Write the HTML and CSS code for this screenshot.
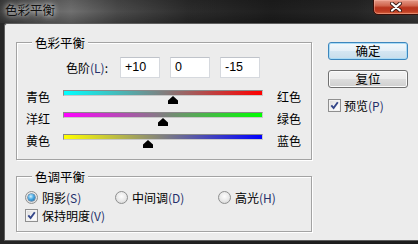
FILE: index.html
```html
<!DOCTYPE html>
<html lang="zh">
<head>
<meta charset="utf-8">
<title>色彩平衡</title>
<link rel="stylesheet" href="styles.css">
</head>
<body>
<div class="window">
  <div class="titlebar">
    <span class="title">色彩平衡</span>
    <span class="close">
      <svg width="12" height="10" viewBox="0 0 12 10">
        <path d="M2 1.5 L10 8.5 M10 1.5 L2 8.5" stroke="#3a1a14" stroke-width="4" stroke-linecap="round"/>
        <path d="M2 1.5 L10 8.5 M10 1.5 L2 8.5" stroke="#ffffff" stroke-width="2.2" stroke-linecap="round"/>
      </svg>
    </span>
  </div>
  <div class="panel">
    <div class="main">
      <fieldset class="group group-color">
        <legend>色彩平衡</legend>
        <div class="levels">
          <span class="levels-label">色阶<span class="key">(L)</span>:</span>
          <span class="field">+10</span>
          <span class="field">0</span>
          <span class="field">-15</span>
        </div>
        <div class="sliders">
          <div class="slider-row">
            <span class="lbl">青色</span>
            <div class="track-wrap">
              <div class="track cyan-red"></div>
              <svg class="thumb" style="left:110px" width="10" height="8" viewBox="0 0 10 8"><path d="M5 0 L10 4.5 V8 H0 V4.5 Z" fill="#000"/></svg>
            </div>
            <span class="lbl lbl-right">红色</span>
          </div>
          <div class="slider-row">
            <span class="lbl">洋红</span>
            <div class="track-wrap">
              <div class="track magenta-green"></div>
              <svg class="thumb" style="left:100px" width="10" height="8" viewBox="0 0 10 8"><path d="M5 0 L10 4.5 V8 H0 V4.5 Z" fill="#000"/></svg>
            </div>
            <span class="lbl lbl-right">绿色</span>
          </div>
          <div class="slider-row">
            <span class="lbl">黄色</span>
            <div class="track-wrap">
              <div class="track yellow-blue"></div>
              <svg class="thumb" style="left:85px" width="10" height="8" viewBox="0 0 10 8"><path d="M5 0 L10 4.5 V8 H0 V4.5 Z" fill="#000"/></svg>
            </div>
            <span class="lbl lbl-right">蓝色</span>
          </div>
        </div>
      </fieldset>
      <fieldset class="group group-tone">
        <legend>色调平衡</legend>
        <div class="radios">
          <span class="opt opt-1"><span class="radio on"></span><span>阴影<span class="key">(S)</span></span></span>
          <span class="opt opt-2"><span class="radio"></span><span>中间调<span class="key">(D)</span></span></span>
          <span class="opt"><span class="radio"></span><span>高光<span class="key">(H)</span></span></span>
        </div>
        <span class="opt check-row"><span class="checkbox"><svg width="9" height="9" viewBox="0 0 9 9"><path d="M1.3 4.3 L3.6 7 L7.8 1.2" fill="none" stroke="#34478a" stroke-width="1.9"/></svg></span><span>保持明度<span class="key">(V)</span></span></span>
      </fieldset>
    </div>
    <div class="side">
      <button class="btn btn-default">确定</button>
      <button class="btn">复位</button>
      <span class="opt side-check"><span class="checkbox"><svg width="9" height="9" viewBox="0 0 9 9"><path d="M1.3 4.3 L3.6 7 L7.8 1.2" fill="none" stroke="#34478a" stroke-width="1.9"/></svg></span><span>预览<span class="key">(P)</span></span></span>
    </div>
  </div>
</div>
</body>
</html>
```
FILE: styles.css
```css
* { box-sizing: border-box; }
html, body { margin: 0; padding: 0; }
body {
  background: #111;
  font-family: "Noto Sans CJK SC", "Noto Sans", sans-serif;
  font-size: 12px;
  color: #000;
}
.window {
  width: 418px;
  height: 244px;
  overflow: hidden;
  display: flex;
  flex-direction: column;
  background: linear-gradient(to right, #262626 0%, #1c1c1c 100%);
}
.titlebar {
  height: 23px;
  flex: none;
  display: flex;
  align-items: flex-start;
  background:
    linear-gradient(to bottom, rgba(0,0,0,0.15) 0%, rgba(0,0,0,0) 50%, rgba(0,0,0,0.25) 100%),
    linear-gradient(to right, #3e3e3e 0%, #5c5c5c 8%, #707070 17%, #4c4c4c 28%, #2c2c2c 45%, #1e1e1e 65%, #262626 85%, #3a3a3a 100%);
}
.title {
  margin: 2px 0 0 5px;
  font-size: 12.5px;
  line-height: 16px;
  color: #111;
  text-shadow: 0 0 5px rgba(255,255,255,0.85), 0 0 9px rgba(255,255,255,0.5);
}
.close {
  margin-left: auto;
  margin-right: -4px;
  margin-top: -1px;
  width: 49px;
  height: 16px;
  border: 1px solid #3b0d06;
  border-radius: 0 0 5px 5px;
  background: linear-gradient(#e59a88 0%, #d0664e 40%, #b8341c 55%, #bd3b22 80%, #d8663e 100%);
  box-shadow: inset 0 0 0 1px rgba(255,190,175,0.45);
  display: flex;
  align-items: center;
  justify-content: center;
}
.close svg { display: block; margin-left: -3px; }
.panel {
  flex: 1;
  margin: 0 0 3px 4px;
  background: #ececec;
  border: 1px solid #5e5e5e;
  border-right: none;
  border-top-left-radius: 3px;
  display: flex;
  gap: 16px;
  padding: 10px 0 0 11px;
}
.main { width: 296px; display: flex; flex-direction: column; gap: 8px; }
.group {
  margin: 0;
  min-width: 0;
  width: 296px;
  border: 1px solid #a3a3a3;
  box-shadow: 1px 1px 0 #fff, inset 1px 1px 0 #fff;
}
.group-color { padding: 6px 8px 12px 8px; }
.group-tone { padding: 6px 8px 9px 8px; }
legend {
  padding: 0 3px;
  margin-left: 7px;
  line-height: 17px;
  font-size: 12.5px;
  background: #ececec;
}
.key { color: #25306a; }
.levels {
  display: flex;
  align-items: center;
  gap: 10px;
  margin-left: 41px;
  height: 21px;
}
.levels-label { width: 44px; white-space: nowrap; }
.field {
  width: 40px;
  height: 21px;
  background: #fff;
  border: 1px solid #d6d9de;
  border-top-color: #bfc3ca;
  padding-left: 4px;
  font-family: "Liberation Sans", Arial, sans-serif;
  font-size: 12.5px;
  line-height: 19px;
}
.sliders {
  margin-top: 12px;
  display: flex;
  flex-direction: column;
  gap: 9px;
}
.slider-row {
  display: grid;
  grid-template-columns: 38px 200px 1fr;
  align-items: center;
  height: 13px;
}
.lbl { line-height: 13px; white-space: nowrap; padding-left: 1px; }
.lbl-right { margin-left: 13px; }
.track-wrap { position: relative; height: 13px; }
.track {
  height: 6px;
  border: 1px solid #8a8a8a;
  border-bottom-color: #c8c8c8;
  border-right-color: #c8c8c8;
}
.cyan-red { background: linear-gradient(to right, #00ffff, #ff0000); }
.magenta-green { background: linear-gradient(to right, #ff00ff, #00ff00); }
.yellow-blue { background: linear-gradient(to right, #ffff00, #0000ff); }
.thumb {
  position: absolute;
  top: 6px;
  margin-left: -5px;
  display: block;
}
.radios { display: flex; align-items: center; height: 13px; }
.opt { display: flex; align-items: center; gap: 4px; white-space: nowrap; line-height: 13px; }
.opt-1 { width: 90px; }
.opt-2 { width: 103px; }
.check-row { margin-top: 5px; height: 13px; }
.radio {
  flex: none;
  width: 13px;
  height: 13px;
  border-radius: 50%;
  border: 1px solid #8e8f8f;
  background: radial-gradient(circle at 50% 40%, #fdfdfd 0%, #e8e8e8 55%, #cdcdcd 100%);
  position: relative;
}
.radio.on::after {
  content: "";
  position: absolute;
  left: 2px;
  top: 2px;
  width: 7px;
  height: 7px;
  border-radius: 50%;
  background: radial-gradient(circle at 40% 35%, #d2f1ff 0%, #4aaae3 45%, #0f5795 100%);
  box-shadow: 0 0 0 0.5px #1b4f7e;
}
.checkbox {
  flex: none;
  width: 13px;
  height: 13px;
  border: 1px solid #8f8f8f;
  background: linear-gradient(135deg, #d9d9d9 0%, #f6f6f6 60%, #ffffff 100%);
  box-shadow: inset 0 0 0 1px #f2f2f2;
  display: flex;
  align-items: center;
  justify-content: center;
}
.checkbox svg { display: block; }
.side {
  width: 80px;
  padding-top: 8px;
  display: flex;
  flex-direction: column;
}
.btn {
  display: block;
  width: 80px;
  height: 18px;
  padding: 0;
  margin: 0 0 10px 0;
  border: 1px solid #707070;
  border-radius: 3px;
  background: linear-gradient(#f2f2f2 0%, #ebebeb 50%, #dddddd 51%, #cfcfcf 100%);
  box-shadow: inset 0 0 0 1px #fbfbfb;
  font-family: "Noto Sans CJK SC", sans-serif;
  font-size: 12.5px;
  line-height: 16px;
  color: #000;
}
.btn-default {
  border-color: #3c86bd;
  background: linear-gradient(#f2f8fc 0%, #e4eff7 50%, #d4e6f2 51%, #c8ddeb 100%);
  box-shadow: inset 0 0 0 1px #a9dbf6;
}
.side-check { margin-top: 1px; gap: 3px; }
```
